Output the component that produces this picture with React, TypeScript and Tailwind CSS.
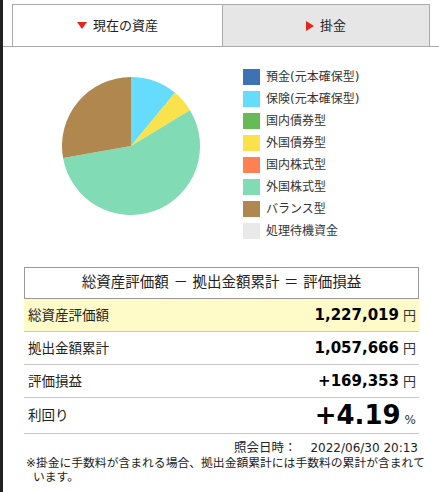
import React from "react";

/* ─── Data ─────────────────────────────────────────────────────── */

const legend = [
    { label: "預金(元本確保型)", color: "#3d72b5" },
    { label: "保険(元本確保型)", color: "#66dcfd" },
    { label: "国内債券型", color: "#66bb55" },
    { label: "外国債券型", color: "#f9e24b" },
    { label: "国内株式型", color: "#ff8052" },
    { label: "外国株式型", color: "#81dbb4" },
    { label: "バランス型", color: "#b0884f" },
    { label: "処理待機資金", color: "#e9e9e9" },
];

// share of each slice, clockwise from 12 o'clock
const slices = [
    { value: 11.0, color: "#66dcfd" },
    { value: 5.3, color: "#f9e24b" },
    { value: 55.9, color: "#81dbb4" },
    { value: 27.8, color: "#b0884f" },
];

const FONT = { fontFamily: '"DejaVu Sans", "Noto Sans CJK JP", sans-serif' };

/* ─── Pie ──────────────────────────────────────────────────────── */

const Pie: React.FC = () => {
    const cx = 70;
    const cy = 70;
    const r = 69;
    const total = slices.reduce((s, x) => s + x.value, 0);
    let acc = 0;

    const point = (a: number) => {
        const rad = (a / total) * Math.PI * 2;
        return [cx + r * Math.sin(rad), cy - r * Math.cos(rad)];
    };

    return (
        <svg width="140" height="140" viewBox="0 0 140 140">
            {slices.map((s, i) => {
                const [x1, y1] = point(acc);
                acc += s.value;
                const [x2, y2] = point(acc);
                const large = s.value / total > 0.5 ? 1 : 0;
                return (
                    <path
                        key={i}
                        d={`M${cx},${cy} L${x1},${y1} A${r},${r} 0 ${large} 1 ${x2},${y2} Z`}
                        fill={s.color}
                    />
                );
            })}
        </svg>
    );
};

/* ─── Summary row ──────────────────────────────────────────────── */

const Row: React.FC<{
    label: string;
    value: string;
    unit: string;
    big?: boolean;
    highlight?: boolean;
}> = ({ label, value, unit, big, highlight }) => (
    <div
        className={`flex items-center justify-between border-b border-[#c8c8c8] pl-[4px] pr-[3px] ${big ? "h-[36px]" : "h-[33px]"
            } ${highlight ? "bg-[#fffbc9]" : ""}`}
    >
        <span className="text-[13.5px] text-[#222]">{label}</span>
        <span className="flex items-baseline">
            <span className={`font-bold text-black ${big ? "text-[26px]" : "text-[15px]"}`}>
                {value}
            </span>
            <span className={`ml-[4px] text-[#333] ${big ? "text-[12px]" : "text-[13px]"}`}>
                {unit}
            </span>
        </span>
    </div>
);

/* ─── Main ─────────────────────────────────────────────────────── */

export default function App() {
    return (
        <div className="flex w-[439px] h-[492px] overflow-hidden bg-white" style={FONT}>
            <div className="w-[3px] shrink-0 bg-[#222]" />

            <div className="flex-1 flex flex-col">
                {/* Tabs */}
                <div className="flex pt-[4px] border-b border-[#aaa]">
                    <div className="w-[9px]" />
                    <div className="w-[211px] h-[42px] -mb-px bg-white border border-b-0 border-[#aaa] flex items-center justify-center gap-[6px] text-[13px] text-[#222]">
                        <span className="w-0 h-0 border-l-[5px] border-r-[5px] border-t-[7px] border-l-transparent border-r-transparent border-t-[#e8231a]" />
                        現在の資産
                    </div>
                    <div className="w-[207px] h-[42px] bg-[#e6e6e6] border border-l-0 border-b-0 border-[#aaa] flex items-center justify-center gap-[6px] text-[13px] text-[#222]">
                        <span className="w-0 h-0 border-t-[5px] border-b-[5px] border-l-[8px] border-t-transparent border-b-transparent border-l-[#e8231a]" />
                        掛金
                    </div>
                </div>

                {/* Chart + legend */}
                <div className="flex pt-[22px]">
                    <div className="ml-[58px] mt-[7px]">
                        <Pie />
                    </div>
                    <div className="ml-[42px] flex flex-col gap-[6px]">
                        {legend.map((l) => (
                            <div key={l.label} className="flex items-center h-[16px]">
                                <span className="w-[17px] h-[16px]" style={{ backgroundColor: l.color }} />
                                <span className="ml-[6px] text-[12px] text-[#333] leading-none">{l.label}</span>
                            </div>
                        ))}
                    </div>
                </div>

                {/* Summary table */}
                <div className="ml-[21px] w-[395px] mt-[28px]">
                    <div className="h-[32px] border border-[#999] flex items-center justify-center text-[14.5px] text-[#222]">
                        総資産評価額 － 拠出金額累計 ＝ 評価損益
                    </div>
                    <Row label="総資産評価額" value="1,227,019" unit="円" highlight />
                    <Row label="拠出金額累計" value="1,057,666" unit="円" />
                    <Row label="評価損益" value="+169,353" unit="円" />
                    <Row label="利回り" value="+4.19" unit="%" big />

                    <div className="mt-[6px] h-[16px] flex items-center justify-end pr-[1px] text-[#222]">
                        <span className="text-[12.5px]">照会日時：</span>
                        <span className="ml-[14px] text-[12px]">2022/06/30 20:13</span>
                    </div>
                    <p className="ml-[2px] w-[400px] pl-[7px] -indent-[7px] text-[11.8px] leading-[14px] text-[#222]">
                        ※掛金に手数料が含まれる場合、拠出金額累計には手数料の累計が含まれています。
                    </p>
                </div>
            </div>
        </div>
    );
}
